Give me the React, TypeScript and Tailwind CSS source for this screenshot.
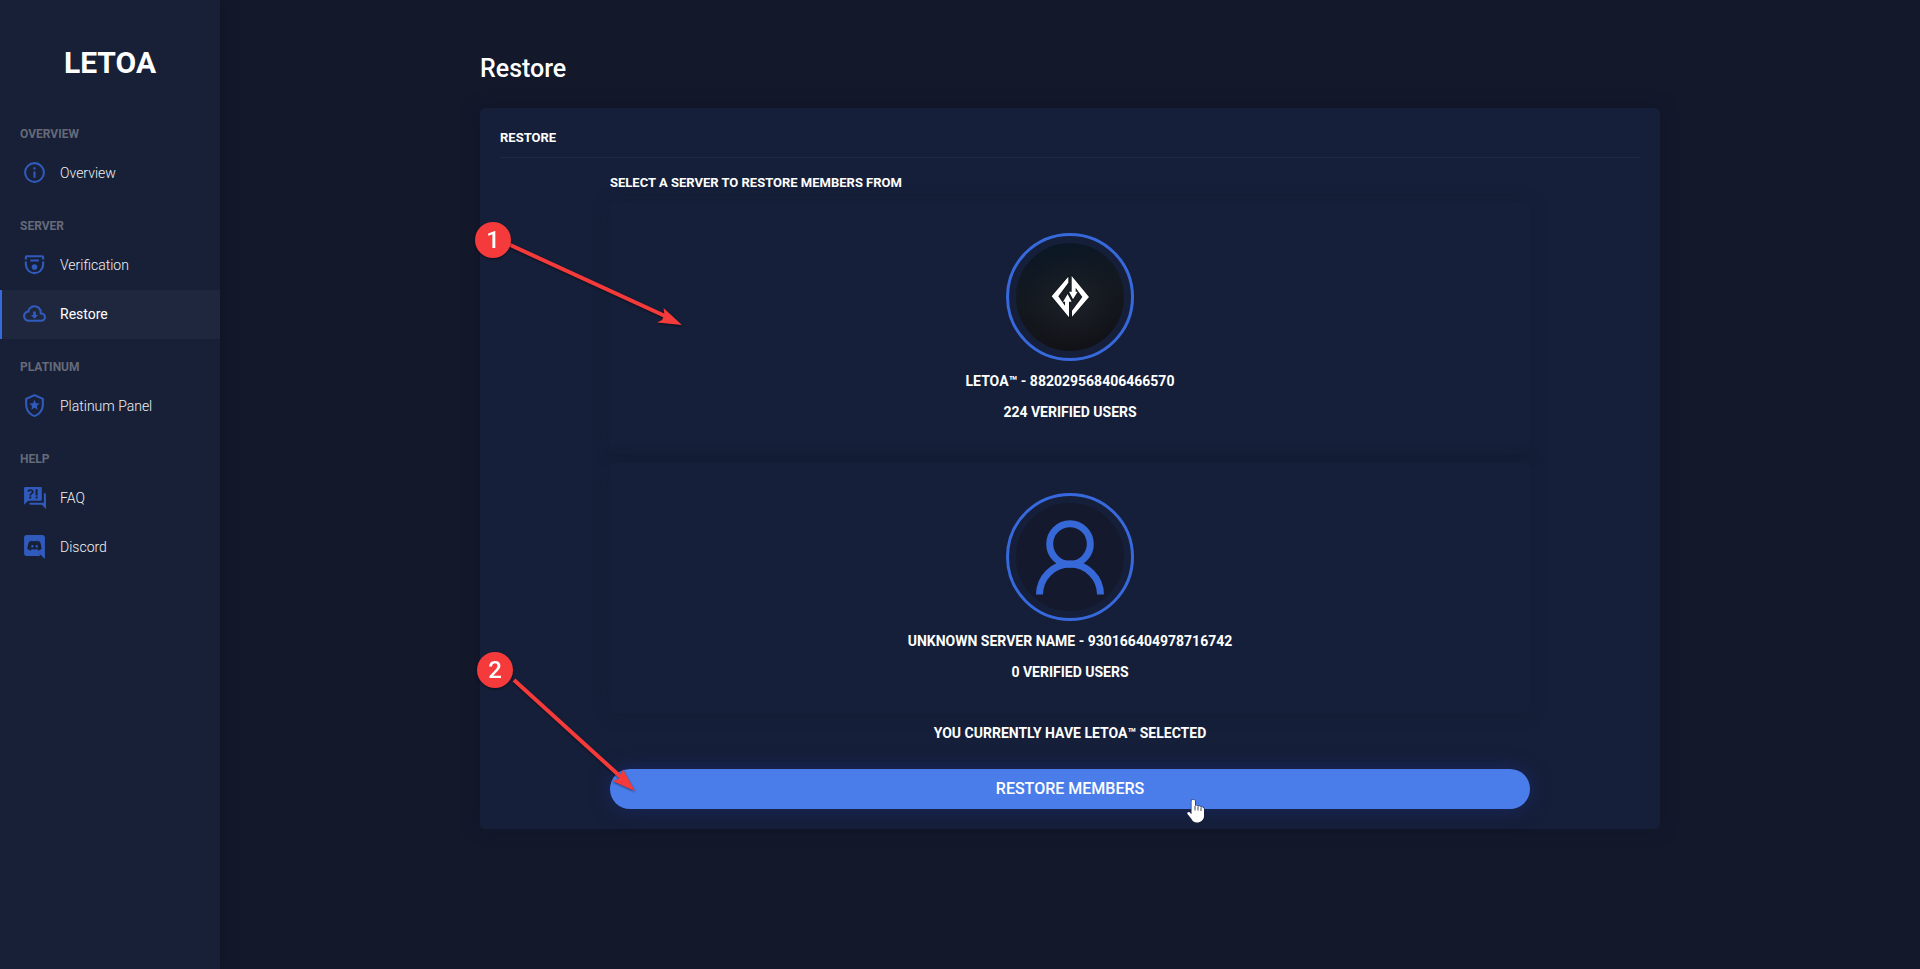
import React from "react";

const ICONS = {
  info: "M11,9H13V7H11M12,20C7.59,20 4,16.41 4,12C4,7.59 7.59,4 12,4C16.41,4 20,7.59 20,12C20,16.41 16.41,20 12,20M12,2A10,10 0 0,0 2,12A10,10 0 0,0 12,22A10,10 0 0,0 22,12A10,10 0 0,0 12,2M11,17H13V11H11V17Z",
  badge:
    "M2.700 7.200V5A2 2 0 0 1 4.700 3H19.300A2 2 0 0 1 21.300 5V7.200H19.300V5H4.700V7.200ZM2.700 9H4.700V12A7.300 7.300 0 0 0 19.300 12V9H21.300V12A9.300 9.300 0 0 1 2.700 12ZM8 7.300H16.200V9H8ZM12 11.700A2.700 2.700 0 1 1 12 17.100A2.700 2.700 0 0 1 12 11.700Z",
  cloud:
    "M6.5 20Q4.22 20 2.61 18.43 1 16.85 1 14.58 1 12.63 2.17 11.1 3.35 9.57 5.25 9.15 5.88 6.85 7.75 5.43 9.63 4 12 4 14.93 4 16.96 6.04 19 8.07 19 11 20.73 11.2 21.86 12.5 23 13.78 23 15.5 23 17.38 21.69 18.69 20.38 20 18.5 20M6.5 18H18.5Q19.55 18 20.27 17.27 21 16.55 21 15.5 21 14.45 20.27 13.73 19.55 13 18.5 13H17V11Q17 8.93 15.54 7.46 14.08 6 12 6 9.93 6 8.46 7.46 7 8.93 7 11H6.5Q5.05 11 4.03 12.03 3 13.05 3 14.5 3 15.95 4.03 17 5.05 18 6.5 18M12 17L8.500 13.500H10.700V10H13.300V13.500H15.500Z",
  shield:
    "M21,11C21,16.55 17.16,21.74 12,23C6.84,21.74 3,16.55 3,11V5L12,1L21,5V11M12,21C15.75,20 19,15.54 19,11.22V6.3L12,3.18L5,6.3V11.22C5,15.54 8.25,20 12,21M15.05,16L11.97,14.15L8.9,16L9.71,12.5L7,10.16L10.58,9.85L11.97,6.55L13.37,9.84L16.95,10.15L14.23,12.5L15.05,16",
  faq: "M18,15H6L2,19V3A1,1 0 0,1 3,2H18A1,1 0 0,1 19,3V14A1,1 0 0,1 18,15M23,9V23L19,19H8A1,1 0 0,1 7,18V17H21V8H22A1,1 0 0,1 23,9M8.19,4C7.32,4 6.62,4.2 6.08,4.59C5.56,5 5.3,5.57 5.31,6.36L5.32,6.39H7.25C7.26,6.09 7.35,5.86 7.53,5.7C7.71,5.55 7.93,5.47 8.19,5.47C8.5,5.47 8.76,5.57 8.94,5.75C9.12,5.94 9.2,6.2 9.2,6.5C9.2,6.82 9.13,7.09 8.97,7.32C8.83,7.55 8.62,7.75 8.36,7.91C7.85,8.25 7.5,8.55 7.31,8.82C7.11,9.08 7,9.5 7,10H9C9,9.69 9.04,9.44 9.13,9.26C9.22,9.08 9.39,8.9 9.64,8.74C10.09,8.5 10.46,8.21 10.75,7.81C11.04,7.41 11.19,7 11.19,6.5C11.19,5.74 10.92,5.13 10.38,4.68C9.85,4.23 9.12,4 8.19,4M7,11V13H9V11H7M13,13H15V11H13V13M13,4V10H15V4H13Z",
  discord:
    "M22,24L16.75,19L17.38,21H4.5A2.5,2.5 0 0,1 2,18.5V3.5A2.5,2.5 0 0,1 4.5,1H19.5A2.5,2.5 0 0,1 22,3.5V24M12,6.8C9.32,6.8 7.44,7.95 7.44,7.95C8.47,7.03 10.27,6.5 10.27,6.5L10.1,6.33C8.41,6.36 6.88,7.53 6.88,7.53C5.16,11.12 5.27,14.22 5.27,14.22C6.67,16.03 8.75,15.9 8.75,15.9L9.46,15C8.21,14.73 7.42,13.62 7.42,13.62C7.42,13.62 9.3,14.9 12,14.9C14.7,14.9 16.58,13.62 16.58,13.62C16.58,13.62 15.79,14.73 14.54,15L15.25,15.9C15.25,15.9 17.33,16.03 18.73,14.22C18.73,14.22 18.84,11.12 17.12,7.53C17.12,7.53 15.59,6.36 13.9,6.33L13.73,6.5C13.73,6.5 15.53,7.03 16.56,7.95C16.56,7.95 14.68,6.8 12,6.8M9.93,10.59C10.58,10.59 11.11,11.16 11.1,11.86C11.1,12.55 10.58,13.13 9.93,13.13C9.29,13.13 8.77,12.55 8.77,11.86C8.77,11.16 9.28,10.59 9.93,10.59M14.1,10.59C14.75,10.59 15.27,11.16 15.27,11.86C15.27,12.55 14.75,13.13 14.1,13.13C13.46,13.13 12.94,12.55 12.94,11.86C12.94,11.16 13.45,10.59 14.1,10.59Z",
};

type IconName = keyof typeof ICONS;

const NAV: { title: string; items: { label: string; icon: IconName; active?: boolean }[] }[] = [
  { title: "Overview", items: [{ label: "Overview", icon: "info" }] },
  {
    title: "Server",
    items: [
      { label: "Verification", icon: "badge" },
      { label: "Restore", icon: "cloud", active: true },
    ],
  },
  { title: "Platinum", items: [{ label: "Platinum Panel", icon: "shield" }] },
  {
    title: "Help",
    items: [
      { label: "FAQ", icon: "faq" },
      { label: "Discord", icon: "discord" },
    ],
  },
];

function Sidebar() {
  return (
    <aside className="w-[220px] shrink-0 bg-[#182037] shadow-[0_0_20px_rgba(0,0,0,0.2)]">
      <div className="pt-10 pb-[38px] text-center text-[30px] leading-[45px] font-bold">LETOA</div>
      <nav>
        {NAV.map((group) => (
          <section key={group.title} className="mb-[17px]">
            <h2 className="px-5 pb-1 text-xs leading-[22px] font-bold text-[#656a79] uppercase">{group.title}</h2>
            {group.items.map((item) => (
              <a
                key={item.label}
                href="#"
                aria-current={item.active ? "page" : undefined}
                className={
                  item.active
                    ? "flex h-[49px] items-center gap-[13px] border-l-2 border-[#3768dc] bg-[#1f273e] pb-0.5 pl-5 text-sm text-white"
                    : "flex h-[49px] items-center gap-[13px] border-l-2 border-transparent pb-0.5 pl-5 text-sm font-light text-[#f0f1f4]"
                }
              >
                <svg viewBox="0 0 24 24" className="size-[25px] fill-[#305bbd]" aria-hidden="true">
                  <path d={ICONS[item.icon]} fillRule="evenodd" />
                </svg>
                <span>{item.label}</span>
              </a>
            ))}
          </section>
        ))}
      </nav>
    </aside>
  );
}

function LetoaAvatar() {
  return (
    <svg viewBox="0 0 108 108" className="size-[108px] rounded-full" aria-hidden="true">
      <defs>
        <linearGradient id="night" x1="0.3" y1="0" x2="0.5" y2="1">
          <stop offset="0" stopColor="#0b1726" />
          <stop offset="0.5" stopColor="#14191f" />
          <stop offset="1" stopColor="#111217" />
        </linearGradient>
        <radialGradient id="glow">
          <stop offset="0" stopColor="#20252d" stopOpacity="0.8" />
          <stop offset="1" stopColor="#1b1f27" stopOpacity="0" />
        </radialGradient>
      </defs>
      <rect width="108" height="108" fill="url(#night)" />
      <circle cx="56" cy="58" r="46" fill="url(#glow)" />
      <g transform="translate(29 27) scale(0.3333)" fill="#fff" stroke="#0b0d11" strokeOpacity="0.7" strokeWidth="4" paintOrder="stroke">
        <path d="M70 20V38L40 79 60 107V95H54L68 72 80 95H72V142L20 79Z" />
        <path d="M81 140V122L112 81 92 53V65H98L84 88 72 65H80V18L132 81Z" />
      </g>
    </svg>
  );
}

function UnknownAvatar() {
  return (
    <svg viewBox="0 0 108 108" className="size-[108px] rounded-full bg-[#14192d]" aria-hidden="true">
      <g fill="none" stroke="#3768d8" strokeWidth="7">
        <circle cx="54" cy="41" r="20.3" />
        <path d="M23.500 91.500A30.500 30.500 0 0 1 84.500 91.500" />
      </g>
    </svg>
  );
}

function ServerCard({ name, users, children }: { name: string; users: string; children: React.ReactNode }) {
  return (
    <button
      type="button"
      className="flex h-[250px] w-full flex-col items-center rounded-[5px] bg-[#151f39] pt-[30px] text-sm font-bold uppercase shadow-[0_0_20px_rgba(16,24,40,0.2)]"
    >
      <span className="flex size-32 items-center justify-center rounded-full border-[3px] border-[#3768dc]">{children}</span>
      <span className="mt-[10px] leading-5">{name}</span>
      <span className="mt-[11px] leading-5">{users}</span>
    </button>
  );
}

function Annotations() {
  return (
    <div className="pointer-events-none absolute inset-0" aria-hidden="true">
      <svg className="absolute top-0 left-0 size-[720px] overflow-visible drop-shadow-[0_1px_1px_rgba(0,0,0,0.5)]">
        <g fill="#f43a3a" stroke="none">
          <path d="M28 136 185 208" stroke="#f43a3a" strokeWidth="4" />
          <path d="M202 217 183.500 200 184.500 207 182 212 177 214.500Z" />
          <path d="M34 572 142 670" stroke="#f43a3a" strokeWidth="4" />
          <path d="M155 683 143 661.500 140.500 668.500 138.500 671 132.500 673Z" />
        </g>
      </svg>
      <span className="absolute top-[114px] -left-[5px] flex size-9 items-center justify-center rounded-full bg-[#f43a3a] text-2xl font-medium drop-shadow-[0_1px_1px_rgba(0,0,0,0.5)]">
        1
      </span>
      <span className="absolute top-[544px] -left-[3px] flex size-9 items-center justify-center rounded-full bg-[#f43a3a] text-2xl font-medium drop-shadow-[0_1px_1px_rgba(0,0,0,0.5)]">
        2
      </span>
      <svg viewBox="0 0 17 24" className="absolute top-[691px] left-[707px] h-6 w-[17px] overflow-visible">
        <path
          d="M4.500 2C4.500 0.300 8 0.300 8 2V7C9 6.200 11 6.600 11 7.600C12 6.900 14 7.300 14 8.400C15.200 8 17 8.600 17 10V17C17 21 13.500 23.500 10 23.500C7 23.500 5.500 22 4.500 20L0.500 15C-0.300 13.500 1.500 12.500 2.800 13.500L4.500 15.200Z"
          fill="#fff"
          stroke="#17203a"
          strokeWidth="1.2"
          paintOrder="stroke"
        />
        <path d="M8 7V11.500M11 7.500V11.500M14 8.500V12" stroke="#17203a" strokeWidth="0.8" />
      </svg>
    </div>
  );
}

export default function App() {
  return (
    <div className="flex min-h-screen bg-[#13182b] font-['Roboto',sans-serif] text-white">
      <Sidebar />
      <main className="flex-1 px-5 pt-[51px]">
        <div className="mx-auto max-w-[1180px]">
          <h1 className="mb-[21px] text-[25px] leading-9 font-medium">Restore</h1>
          <div className="relative">
            <section className="rounded-[5px] bg-[#151f39] p-5 shadow-[0_0_16px_rgba(16,20,36,0.6)]">
              <h2 className="border-b border-[#202944] pb-[9px] text-[13px] leading-5 font-bold uppercase">Restore</h2>
              <div className="mx-auto max-w-[920px]">
                <h3 className="pt-4 pb-[11px] text-[13px] leading-[18px] font-bold uppercase">
                  Select a server to restore members from
                </h3>
                <div className="flex flex-col gap-[10px]">
                  <ServerCard name="LETOA™ - 882029568406466570" users="224 verified users">
                    <LetoaAvatar />
                  </ServerCard>
                  <ServerCard name="Unknown Server Name - 930166404978716742" users="0 verified users">
                    <UnknownAvatar />
                  </ServerCard>
                </div>
                <p className="pt-[10px] pb-[26px] text-center text-sm leading-5 font-bold uppercase">
                  You currently have LETOA™ selected
                </p>
                <button
                  type="button"
                  className="h-10 w-full rounded-full bg-[#4a7dea] text-base font-medium uppercase shadow-[0_0_20px_rgba(30,48,140,0.5)]"
                >
                  Restore members
                </button>
              </div>
            </section>
            <Annotations />
          </div>
        </div>
      </main>
    </div>
  );
}
